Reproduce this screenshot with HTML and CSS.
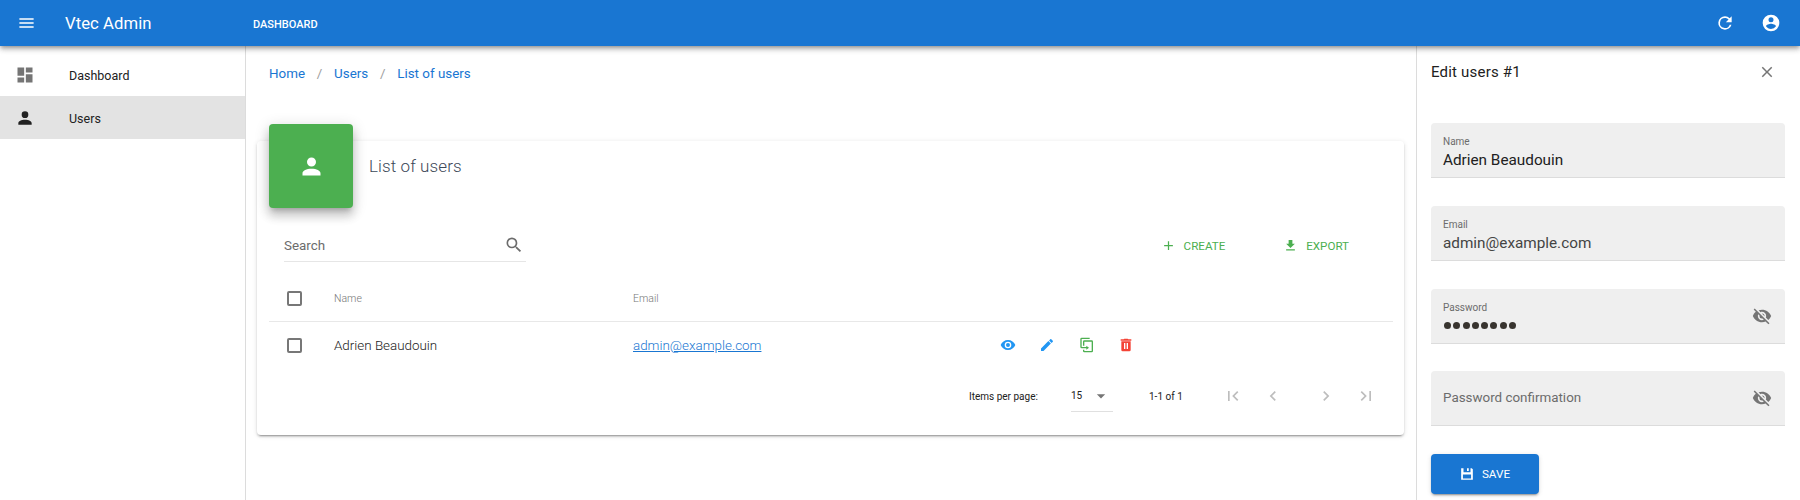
FILE: index.html
```
<!DOCTYPE html>
<html lang="en">
<head>
<meta charset="utf-8">
<title>Vtec Admin</title>
<link rel="stylesheet" href="styles.css">
</head>
<body>
<header class="topbar">
  <svg class="icon menu" viewBox="0 0 24 24"><path d="M3 6h18v2H3V6m0 5h18v2H3v-2m0 5h18v2H3v-2z"/></svg>
  <span class="brand">Vtec Admin</span>
  <a class="toplink">DASHBOARD</a>
  <span class="grow"></span>
  <svg class="icon refresh" viewBox="0 0 24 24"><path d="M17.65 6.35A7.96 7.96 0 0 0 12 4a8 8 0 1 0 7.73 10h-2.08A6 6 0 1 1 12 6c1.66 0 3.14.69 4.22 1.78L13 11h7V4l-2.35 2.35z"/></svg>
  <svg class="icon account" viewBox="0 0 24 24"><path d="M12 19.2c-2.5 0-4.71-1.28-6-3.2.03-2 4-3.1 6-3.1s5.97 1.1 6 3.1a7.23 7.23 0 0 1-6 3.2M12 5a3 3 0 1 1 0 6 3 3 0 0 1 0-6m0-3a10 10 0 1 0 0 20 10 10 0 0 0 0-20z"/></svg>
</header>
<div class="body">
  <nav class="sidebar">
    <a class="nav-item"><svg class="icon" viewBox="0 0 24 24"><path d="M13 3v6h8V3m-8 18h8V11h-8M3 21h8v-6H3m0-2h8V3H3v10z"/></svg><span>Dashboard</span></a>
    <a class="nav-item active"><svg class="icon" viewBox="0 0 24 24"><path d="M12 4a4 4 0 1 1 0 8 4 4 0 0 1 0-8m0 10c4.42 0 8 1.79 8 4v2H4v-2c0-2.21 3.58-4 8-4z"/></svg><span>Users</span></a>
  </nav>
  <main class="content">
    <div class="crumbs"><a>Home</a><i>/</i><a>Users</a><i>/</i><a>List of users</a></div>
    <section class="card">
      <div class="card-head">
        <div class="badge"><svg class="icon" viewBox="0 0 24 24"><path d="M12 4a4 4 0 1 1 0 8 4 4 0 0 1 0-8m0 10c4.42 0 8 1.79 8 4v2H4v-2c0-2.21 3.58-4 8-4z"/></svg></div>
        <h1>List of users</h1>
      </div>
      <div class="toolbar">
        <div class="search"><span>Search</span><svg class="icon" viewBox="0 0 24 24"><path d="M9.5 3A6.5 6.5 0 0 1 16 9.5c0 1.61-.59 3.09-1.56 4.23l.27.27h.79l5 5-1.5 1.5-5-5v-.79l-.27-.27A6.52 6.52 0 0 1 9.5 16a6.5 6.5 0 0 1 0-13m0 2C7 5 5 7 5 9.5S7 14 9.5 14 14 12 14 9.5 12 5 9.5 5z"/></svg></div>
        <a class="tool create"><svg class="icon" viewBox="0 0 24 24"><path d="M19 13h-6v6h-2v-6H5v-2h6V5h2v6h6v2z"/></svg><span>CREATE</span></a>
        <a class="tool"><svg class="icon" viewBox="0 0 24 24"><path d="M5 20h14v-2H5m14-9h-4V3H9v6H5l7 7 7-7z"/></svg><span>EXPORT</span></a>
      </div>
      <div class="row head"><b class="check"></b><span class="name">Name</span><span class="mail">Email</span></div>
      <div class="row"><b class="check"></b><span class="name">Adrien Beaudouin</span><span class="mail"><a>admin@example.com</a></span>
        <div class="actions">
          <svg class="icon blue" viewBox="0 0 24 24"><path d="M12 9a3 3 0 1 0 0 6 3 3 0 0 0 0-6m0 8a5 5 0 1 1 0-10 5 5 0 0 1 0 10m0-12.5C7 4.5 2.73 7.61 1 12c1.73 4.39 6 7.5 11 7.5s9.27-3.11 11-7.5c-1.73-4.39-6-7.5-11-7.5z"/></svg>
          <svg class="icon blue" viewBox="0 0 24 24"><path d="M20.71 7.04c.39-.39.39-1.04 0-1.41l-2.34-2.34c-.37-.39-1.02-.39-1.41 0l-1.84 1.83 3.75 3.75M3 17.25V21h3.75L17.81 9.93l-3.75-3.75L3 17.25z"/></svg>
          <svg class="icon green" viewBox="0 0 24 24"><path d="M11 17H4a2 2 0 0 1-2-2V3a2 2 0 0 1 2-2h12v2H4v12h7v-2l4 3-4 3v-2m8 4V7H8v6H6V7a2 2 0 0 1 2-2h11a2 2 0 0 1 2 2v14a2 2 0 0 1-2 2H8a2 2 0 0 1-2-2v-2h2v2h11z"/></svg>
          <svg class="icon red" viewBox="0 0 24 24"><path d="M20 3.500h-4.500l-1-1h-5l-1 1H4v2h16M5 19.500a2 2 0 0 0 2 2h10a2 2 0 0 0 2-2V6.500H5v13M9 9h2v9H9V9m4 0h2v9h-2V9z"/></svg>
        </div>
      </div>
      <div class="pager">
        <span class="per">Items per page:</span>
        <div class="select"><span>15</span><svg class="icon" viewBox="0 0 24 24"><path d="M7 10l5 5 5-5H7z"/></svg></div>
        <span class="range">1-1 of 1</span>
        <svg class="icon first" viewBox="0 0 24 24"><path d="M18.41 16.59L13.82 12l4.59-4.59L17 6l-6 6 6 6 1.41-1.41M6 6h2v12H6V6z"/></svg>
        <svg class="icon prev" viewBox="0 0 24 24"><path d="M15.41 16.58L10.83 12l4.58-4.59L14 6l-6 6 6 6 1.41-1.42z"/></svg>
        <svg class="icon next" viewBox="0 0 24 24"><path d="M8.59 16.58L13.17 12 8.59 7.41 10 6l6 6-6 6-1.41-1.42z"/></svg>
        <svg class="icon last" viewBox="0 0 24 24"><path d="M5.59 7.41L10.18 12l-4.59 4.59L7 18l6-6-6-6-1.41 1.41M16 6h2v12h-2V6z"/></svg>
      </div>
    </section>
  </main>
  <aside class="panel">
    <div class="panel-head"><h2>Edit users #1</h2><svg class="icon" viewBox="0 0 24 24"><path d="M19 6.41L17.59 5 12 10.59 6.41 5 5 6.41 10.59 12 5 17.59 6.41 19 12 13.41 17.59 19 19 17.59 13.41 12 19 6.41z"/></svg></div>
    <div class="field"><div class="filled"><label>Name</label><p>Adrien Beaudouin</p></div></div>
    <div class="field"><div class="filled"><label>Email</label><p class="soft">admin@example.com</p></div></div>
    <div class="field"><div class="filled"><label>Password</label><p class="dots"><i></i><i></i><i></i><i></i><i></i><i></i><i></i><i></i></p></div><svg class="icon" viewBox="0 0 24 24"><path d="M11.83 9L15 12.16V12a3 3 0 0 0-3-3h-.17m-4.3.8l1.55 1.55c-.05.21-.08.42-.08.65a3 3 0 0 0 3 3c.22 0 .44-.03.65-.08l1.55 1.55c-.67.33-1.41.53-2.2.53a5 5 0 0 1-5-5c0-.79.2-1.53.53-2.2M2 4.27l2.28 2.28.45.45C3.08 8.3 1.78 10 1 12c1.73 4.39 6 7.5 11 7.5 1.55 0 3.03-.3 4.38-.84l.43.42L19.73 22 21 20.73 3.27 3M12 7a5 5 0 0 1 5 5c0 .64-.13 1.26-.36 1.82l2.93 2.93c1.5-1.25 2.7-2.89 3.43-4.75-1.73-4.39-6-7.5-11-7.5-1.4 0-2.74.25-4 .7l2.17 2.15C10.74 7.13 11.35 7 12 7z"/></svg></div>
    <div class="field"><div><p class="hint">Password confirmation</p></div><svg class="icon" viewBox="0 0 24 24"><path d="M11.83 9L15 12.16V12a3 3 0 0 0-3-3h-.17m-4.3.8l1.55 1.55c-.05.21-.08.42-.08.65a3 3 0 0 0 3 3c.22 0 .44-.03.65-.08l1.55 1.55c-.67.33-1.41.53-2.2.53a5 5 0 0 1-5-5c0-.79.2-1.53.53-2.2M2 4.27l2.28 2.28.45.45C3.08 8.3 1.78 10 1 12c1.73 4.39 6 7.5 11 7.5 1.55 0 3.03-.3 4.38-.84l.43.42L19.73 22 21 20.73 3.27 3M12 7a5 5 0 0 1 5 5c0 .64-.13 1.26-.36 1.82l2.93 2.93c1.5-1.25 2.7-2.89 3.43-4.75-1.73-4.39-6-7.5-11-7.5-1.4 0-2.74.25-4 .7l2.17 2.15C10.74 7.13 11.35 7 12 7z"/></svg></div>
    <button class="save"><svg class="icon" viewBox="0 0 24 24"><path fill-rule="evenodd" d="M2 2h4v7h12V2h2l2 2v18H2V2m10 0h3v5h-3V2M5 13v6.500h14V13H5z"/></svg><span>SAVE</span></button>
  </aside>
</div>
</body>
</html>
```

FILE: styles.css
```
* { box-sizing: border-box; }
body {
  margin: 0;
  width: 1800px;
  height: 500px;
  overflow: hidden;
  background: #fff;
  color: #212121;
  font-family: Roboto, sans-serif;
  font-size: 13.4px;
}
h1, h2, p { margin: 0; }
.icon { width: 20px; height: 20px; flex: none; fill: currentColor; display: block; }
.grow { flex: 1; }

.topbar {
  position: relative;
  z-index: 2;
  display: flex;
  align-items: center;
  height: 46px;
  padding: 0 19px 0 17px;
  background: #1976d2;
  color: #fff;
  box-shadow: 0 2px 4px -1px rgba(0,0,0,.3), 0 4px 5px rgba(0,0,0,.14), 0 1px 8px rgba(0,0,0,.12);
}
.menu { width: 19px; }
.brand { width: 188px; margin-left: 29px; font-size: 16.7px; letter-spacing: .05px; }
.toplink { font-size: 11px; font-weight: 500; padding-top: 2px; }
.refresh { margin-right: 26px; }

.body { display: flex; height: 454px; }
.sidebar { width: 246px; padding-top: 8px; border-right: 1px solid #dcdcdc; }
.nav-item {
  display: flex;
  align-items: center;
  height: 42px;
  padding-left: 15px;
  gap: 34px;
  font-size: 12.5px;
}
.nav-item .icon { color: #757575; }
.nav-item.active { height: 43px; padding-top: 1px; background: #e3e3e3; }
.nav-item.active .icon { color: #212121; }

.content { flex: 1; padding: 17px 12px 0 11px; }
.crumbs { display: flex; height: 20px; align-items: center; padding-left: 12px; color: #1976d2; }
.crumbs i { width: 29px; text-align: center; font-style: normal; color: #9e9e9e; }

.card {
  height: 294px;
  margin-top: 58px;
  padding: 0 11px 0 12px;
  border-radius: 4px;
  box-shadow: 0 3px 1px -2px rgba(0,0,0,.2), 0 2px 2px rgba(0,0,0,.14), 0 1px 5px rgba(0,0,0,.12);
}
.card-head { display: flex; height: 68px; }
.badge {
  display: grid;
  place-items: center;
  width: 84px;
  height: 84px;
  margin-top: -17px;
  border-radius: 4px;
  background: #4caf50;
  color: #fff;
  box-shadow: 0 5px 5px -3px rgba(0,0,0,.2), 0 8px 10px 1px rgba(0,0,0,.14), 0 3px 14px 2px rgba(0,0,0,.12);
}
.badge .icon { width: 27px; height: 27px; }
.card-head h1 { margin: 15px 0 0 16px; font-size: 17px; line-height: 20px; font-weight: 300; letter-spacing: .1px; color: #3c4858; }
.toolbar { display: flex; height: 67px; padding: 19px 44px 0 15px; color: #4caf50; }
.search {
  display: flex;
  justify-content: space-between;
  align-items: center;
  width: 242px;
  height: 34px;
  padding: 1px 2px 0 0;
  margin-right: auto;
  border-bottom: 1px solid #e6e6e6;
  color: #6c6c6c;
}
.tool { display: flex; align-items: center; gap: 8px; height: 35px; font-size: 11.6px; }
.tool .icon { width: 15px; height: 15px; }
.create { margin-right: 58px; }

.row { display: flex; align-items: center; height: 46px; padding-left: 18px; font-weight: 300; }
.row.head { border-bottom: 1px solid #e8e8e8; font-size: 10.5px; color: #777; }
.check { width: 15px; height: 15px; border: 2px solid #777; border-radius: 2px; }
.name { width: 299px; margin-left: 32px; }
.mail { width: 367px; }
.mail a { color: #1976d2; text-decoration: underline; }
.actions { display: flex; gap: 23.3px; }
.actions .icon { width: 16px; height: 16px; }
.blue { color: #2196f3; }
.green { color: #4caf50; }
.red { color: #f44336; }

.pager { display: flex; align-items: center; height: 56px; padding-left: 700px; font-size: 10px; }
.pager .icon { color: #bdbdbd; }
.per { width: 102px; }
.select { display: flex; align-items: center; width: 42px; height: 31px; border-bottom: 1px solid #e0e0e0; }
.select .icon { margin-left: 9px; color: #757575; }
.range { width: 74px; margin-left: 36px; }
.prev { margin-left: 20px; }
.next { margin-left: 33px; }
.last { margin-left: 20px; }

.panel { width: 384px; padding: 16px 15px 0 14px; border-left: 1px solid #dcdcdc; }
.panel-head { display: flex; justify-content: space-between; align-items: center; height: 20px; margin-bottom: 41.3px; padding-right: 9px; }
.panel-head h2 { font-size: 15px; font-weight: 400; letter-spacing: .2px; }
.panel-head .icon { width: 18px; height: 18px; color: #757575; }
.field {
  display: flex;
  justify-content: space-between;
  align-items: center;
  height: 55px;
  margin-bottom: 27.7px;
  padding: 0 13px 0 12px;
  border-bottom: 1px solid #dcdcdc;
  border-radius: 4px 4px 0 0;
  background: #efefef;
}
.filled { padding-top: 6px; }
.field label { display: block; font-size: 10px; line-height: 14px; color: #6c6c6c; }
.field p { font-size: 15.3px; line-height: 22px; }
.field .soft { color: #444; }
.field .hint { font-size: 13.4px; color: #6c6c6c; }
.field .icon { color: #757575; }
.field .dots { display: flex; align-items: center; gap: 2.3px; height: 22px; padding-left: 1px; }
.dots i { width: 7px; height: 7px; border-radius: 50%; background: #38342f; }
.save {
  display: flex;
  align-items: center;
  justify-content: center;
  gap: 8px;
  width: 108px;
  height: 40px;
  padding: 0;
  border: 0;
  border-radius: 4px;
  background: #1976d2;
  color: #fff;
  font: 400 11.7px Roboto, sans-serif;
  box-shadow: 0 3px 1px -2px rgba(0,0,0,.2), 0 2px 2px rgba(0,0,0,.14), 0 1px 5px rgba(0,0,0,.12);
}
.save .icon { width: 14px; height: 14px; }
```
